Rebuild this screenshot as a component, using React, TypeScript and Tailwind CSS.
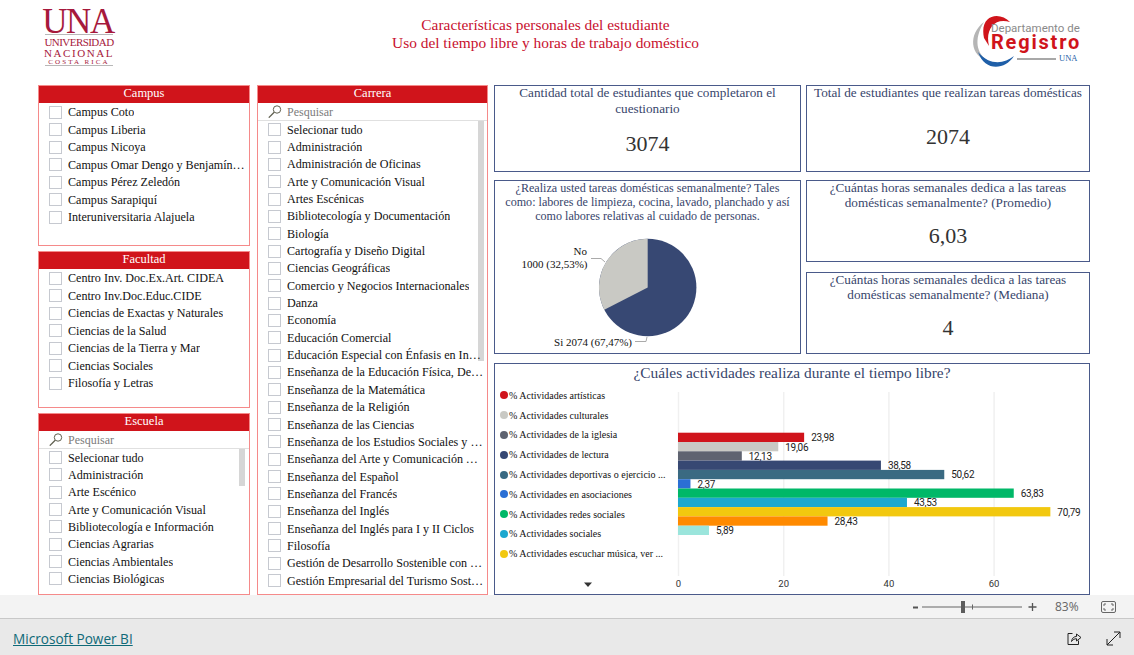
import React from "react";

const serif = { fontFamily: '"Liberation Serif", serif' };

const campus = ["Campus Coto","Campus Liberia","Campus Nicoya","Campus Omar Dengo y Benjamín Núñez","Campus Pérez Zeledón","Campus Sarapiquí","Interuniversitaria Alajuela"];
const facultad = ["Centro Inv. Doc.Ex.Art. CIDEA","Centro Inv.Doc.Educ.CIDE","Ciencias de Exactas y Naturales","Ciencias de la Salud","Ciencias de la Tierra y Mar","Ciencias Sociales","Filosofía y Letras"];
const escuela = ["Selecionar tudo","Administración","Arte Escénico","Arte y Comunicación Visual","Bibliotecología e Información","Ciencias Agrarias","Ciencias Ambientales","Ciencias Biológicas"];
const carrera = ["Selecionar tudo","Administración","Administración de Oficinas","Arte y Comunicación Visual","Artes Escénicas","Bibliotecología y Documentación","Biología","Cartografía y Diseño Digital","Ciencias Geográficas","Comercio y Negocios Internacionales","Danza","Economía","Educación Comercial","Educación Especial con Énfasis en Integración","Enseñanza de la Educación Física, Deporte","Enseñanza de la Matemática","Enseñanza de la Religión","Enseñanza de las Ciencias","Enseñanza de los Estudios Sociales y Educación","Enseñanza del Arte y Comunicación Visual","Enseñanza del Español","Enseñanza del Francés","Enseñanza del Inglés","Enseñanza del Inglés para I y II Ciclos","Filosofía","Gestión de Desarrollo Sostenible con Énfasis","Gestión Empresarial del Turismo Sostenible"];

function SearchRow() {
  return (
    <div className="flex items-center h-[17px] pl-[10px] gap-[5px] shrink-0">
      <svg width="14" height="13" viewBox="0 0 14 13" fill="none" stroke="#5f5f4f" strokeWidth="1">
        <circle cx="9" cy="4.5" r="3.7" />
        <path d="M6.2 7.2 L0.8 12.6" strokeWidth="1.3" />
      </svg>
      <span className="text-[12px] text-[#7b7b7b]">Pesquisar</span>
    </div>
  );
}

function Row({ label, rowClass }: { label: string; rowClass: string }) {
  return (
    <div className={`flex items-center gap-[6px] shrink-0 min-w-0 ${rowClass}`}>
      <span className="w-[13px] h-[13px] border border-[#c6c9d0] bg-white shrink-0" />
      <span className="text-[12.1px] leading-[14px] text-[#111] truncate">{label}</span>
    </div>
  );
}

function Slicer({ title, items, search, className, bar, rowClass }: { title: string; items: string[]; search?: boolean; className: string; bar?: string; rowClass: string }) {
  return (
    <section className={`flex flex-col border border-[#f58a8a] overflow-hidden ${className}`}>
      <div className="h-[17px] shrink-0 bg-[#d0141b] text-white text-[12.5px] leading-[14px] text-center font-normal">{title}</div>
      {search && <SearchRow />}
      <div className={`relative flex-1 min-h-0 overflow-hidden pl-[10px] pr-[3px] ${search ? "border-t border-[#e0e0e0]" : "pt-[0.5px]"}`}>
        {bar && <div className={`absolute top-0 w-[6px] bg-[#d6d6d6] ${bar}`} />}
        <div className="relative flex flex-col">
          {items.map((i) => <Row key={i} label={i} rowClass={rowClass} />)}
        </div>
      </div>
    </section>
  );
}

function Kpi({ title, value, className, valueClass, titleClass }: { title: string; value: string; className: string; valueClass: string; titleClass: string }) {
  return (
    <section className={`flex flex-col border border-[#4a5a8a] px-1 ${className}`}>
      <p className={`text-[13.2px] text-[#37456b] text-center ${titleClass}`}>{title}</p>
      <div className={`flex-1 flex items-center justify-center text-[#333] ${valueClass}`}>{value}</div>
    </section>
  );
}

function Pie() {
  return (
    <section className="w-[307px] h-[174px] border border-[#4a5a8a] flex flex-col">
      <p className="h-[44px] shrink-0 text-[12.1px] leading-[14.2px] text-[#37456b] text-center px-[6px]">
        ¿Realiza usted tareas domésticas semanalmente? Tales como: labores de limpieza, cocina, lavado, planchado y así como labores relativas al cuidado de personas.
      </p>
      <svg viewBox="495 225 305 128" className="w-[305px] h-[128px]" style={serif}>
        <circle cx="647.7" cy="287.5" r="48.7" fill="#374873" />
        <path d="M647.7 287.5 L604.3 309.7 A48.7 48.7 0 0 1 647.7 238.8 Z" fill="#c9c9c4" />
        <path d="M591 258.5 L601 258.5 L605 262" fill="none" stroke="#aaa" />
        <path d="M635 341.5 L646 341.5 L647 337" fill="none" stroke="#aaa" />
        <text x="587" y="255" textAnchor="end" fontSize="11" fill="#111">No</text>
        <text x="587.5" y="268" textAnchor="end" fontSize="11" fill="#111">1000 (32,53%)</text>
        <text x="632" y="346" textAnchor="end" fontSize="11" fill="#111">Si 2074 (67,47%)</text>
      </svg>
    </section>
  );
}

const legend: [string, string][] = [
  ["#d0141b","% Actividades artísticas"],
  ["#c9c9c4","% Actividades culturales"],
  ["#5f6370","% Actividades de la iglesia"],
  ["#374873","% Actividades de lectura"],
  ["#3a6a82","% Actividades deportivas o ejercicio ..."],
  ["#2b6fd4","% Actividades en asociaciones"],
  ["#00b868","% Actividades redes sociales"],
  ["#1da8cf","% Actividades sociales"],
  ["#f2c80f","% Actividades escuchar música, ver ..."],
];

const bars: [string, number, string][] = [
  ["#d0141b",23.98,"23,98"],
  ["#c9c9c4",19.06,"19,06"],
  ["#5f6370",12.13,"12,13"],
  ["#374873",38.58,"38,58"],
  ["#3a6a82",50.62,"50,62"],
  ["#2b6fd4",2.37,"2,37"],
  ["#00b868",63.83,"63,83"],
  ["#1da8cf",43.53,"43,53"],
  ["#f2c80f",70.79,"70,79"],
  ["#ff8a00",28.43,"28,43"],
  ["#9be5dc",5.89,"5,89"],
];

function Chart() {
  return (
    <section className="w-[596px] h-[232px] border border-[#4a5a8a] flex flex-col">
      <h2 className="h-[20px] shrink-0 text-[15.4px] leading-[18px] text-[#37456b] text-center font-normal">¿Cuáles actividades realiza durante el tiempo libre?</h2>
      <div className="flex flex-1 min-h-0">
        <div className="w-[175px] shrink-0 flex flex-col pl-[5px] pt-[1.5px] relative">
          {legend.map(([c, t]) => (
            <div key={t} className="h-[19.8px] flex items-center gap-[1px] text-[10px] text-[#111] whitespace-nowrap">
              <span className="w-[8px] h-[8px] rounded-full shrink-0" style={{ background: c }} />
              <span>{t}</span>
            </div>
          ))}
          <svg width="10" height="6" viewBox="0 0 10 6" className="absolute left-[88px] top-[198px]">
            <path d="M1 0.5 H9 L5 5 Z" fill="#333" />
          </svg>
        </div>
        <svg viewBox="670 384 419 210" className="w-[419px] h-[210px]" style={{ fontFamily: 'Roboto, sans-serif' }}>
          {[0, 20, 40, 60].map((t) => {
            const x = 678.5 + t * 5.26;
            return (
              <g key={t}>
                <line x1={x} x2={x} y1="392" y2="576" stroke="#f0f0f0" strokeWidth="1.5" />
                <text x={x} y="587" textAnchor="middle" fontSize="9.5" fill="#333">{t}</text>
              </g>
            );
          })}
          {bars.map(([c, v, l], i) => {
            const y = 432.7 + i * 9.3;
            const w = v * 5.26;
            return (
              <g key={l}>
                <rect x="678" y={y} width={w} height="9.3" fill={c} />
                <text x={678 + w + 7} y={y + 8.5} fontSize="10" letterSpacing="-0.3" fill="#222">{l}</text>
              </g>
            );
          })}
        </svg>
      </div>
    </section>
  );
}

function UnaLogo() {
  return (
    <div className="w-[70px] flex flex-col items-center text-[#a6193c] leading-none whitespace-nowrap">
      <div className="text-[35px] h-[26px] leading-[27px] tracking-[-1.5px]">UNA</div>
      <div className="w-[68px] h-[1px] bg-[#b8b8b8] ml-[2px] mb-[1px]" />
      <div className="text-[11px] h-[11px] leading-[12px] tracking-[-0.55px] ml-[2px]">UNIVERSIDAD</div>
      <div className="text-[11px] h-[11px] leading-[12px] tracking-[1.55px] ml-[2px]">NACIONAL</div>
      <div className="text-[7px] h-[7px] leading-[8px] tracking-[2.1px] ml-[2px]">COSTA RICA</div>
      <div className="w-[68px] h-[1px] bg-[#b8b8b8] ml-[2px]" />
    </div>
  );
}

function RegistroLogo() {
  return (
    <svg width="120" height="62" viewBox="968 12 120 62" style={{ fontFamily: 'Roboto, sans-serif' }}>
      <path d="M984 22 C968 34 970 56 988 61 C977 54 973 40 984 22 Z" fill="#b5b5b5" />
      <path d="M1010 22 C1000 11 979 14 984 38 L989 46 C985 30 994 17 1010 22 Z" fill="#d0141b" />
      <path d="M978 52 C985 72 1005 70 1014 56 C1004 64 990 66 978 52 Z" fill="#1f5fa8" />
      <text x="991" y="32" fontSize="11.5" fill="#8a8a8a">Departamento de</text>
      <text x="991" y="49" fontSize="20" fontWeight="700" letterSpacing="1.8" fill="#d0141b">Registro</text>
      <rect x="1017" y="58" width="39" height="2" fill="#a8a8a8" />
      <text x="1059" y="61" fontSize="8.5" fill="#1f5fa8" style={serif}>UNA</text>
    </svg>
  );
}

export default function App() {
  return (
    <div className="w-[1134px] h-[655px] flex flex-col bg-white overflow-hidden" style={serif}>
      <header className="h-[85px] shrink-0 flex items-start">
        <div className="w-[130px] pl-[43px] pt-[8px]"><UnaLogo /></div>
        <div className="flex-1 pt-[16px] text-center text-[15.4px] leading-[18px] text-[#c8102e]">
          <div>Características personales del estudiante</div>
          <div>Uso del tiempo libre y horas de trabajo doméstico</div>
        </div>
        <div className="w-[173px] pl-[7px] pt-[12px]"><RegistroLogo /></div>
      </header>
      <main className="h-[510px] shrink-0 flex pl-[38px]">
        <div className="w-[212px] flex flex-col gap-[5px]">
          <Slicer title="Campus" items={campus} className="h-[161px]" rowClass="h-[17.5px]" />
          <Slicer title="Facultad" items={facultad} className="h-[157px]" rowClass="h-[17.5px]" />
          <Slicer title="Escuela" items={escuela} search className="h-[182px]" bar="h-[37px] right-[4px]" rowClass="h-[17.33px]" />
        </div>
        <Slicer title="Carrera" items={carrera} search className="w-[231px] ml-[7px]" bar="h-[240px] right-[3px]" rowClass="h-[17.35px]" />
        <div className="w-[596px] ml-[6px] flex flex-col">
          <div className="flex gap-[5px] h-[87px]">
            <Kpi title="Cantidad total de estudiantes que completaron el cuestionario" value="3074" className="w-[307px]" valueClass="text-[22px] pb-[2px]" titleClass="leading-[16px] px-[4px] -mt-[1px]" />
            <Kpi title="Total de estudiantes que realizan tareas domésticas" value="2074" className="w-[284px]" valueClass="text-[22px]" titleClass="leading-[16px] -mt-[1px]" />
          </div>
          <div className="flex gap-[5px] h-[174px] mt-[8px]">
            <Pie />
            <div className="w-[284px] flex flex-col gap-[10px]">
              <Kpi title="¿Cuántas horas semanales dedica a las tareas domésticas semanalmente? (Promedio)" value="6,03" className="h-[82px]" valueClass="text-[22px] pb-[1px]" titleClass="leading-[14.5px] px-[4px]" />
              <Kpi title="¿Cuántas horas semanales dedica a las tareas domésticas semanalmente? (Mediana)" value="4" className="h-[82px]" valueClass="text-[22px] pb-[1px]" titleClass="leading-[14.5px] px-[4px]" />
            </div>
          </div>
          <div className="mt-[9px]"><Chart /></div>
        </div>
      </main>
      <div className="h-[24px] shrink-0 bg-[#f3f3f3] border-b border-[#c8c8c8] flex items-center justify-end text-[#666]" style={{ fontFamily: '"Open Sans", sans-serif' }}>
        <svg width="124" height="14" viewBox="0 0 124 14" className="mr-[18px]">
          <rect x="0" y="6.5" width="5" height="2" fill="#555" />
          <rect x="9" y="6.5" width="100" height="1" fill="#666" />
          <rect x="48" y="1" width="4" height="12" fill="#5c5c5c" />
          <rect x="59" y="4.5" width="1" height="5" fill="#666" />
          <path d="M119.5 3 V11 M115.5 7 H123.5" stroke="#555" strokeWidth="1.3" />
        </svg>
        <span className="text-[12px] w-[24px] mr-[22px]">83%</span>
        <svg width="15" height="12" viewBox="0 0 15 12" fill="none" stroke="#666" className="mr-[18px]">
          <rect x="0.5" y="0.5" width="14" height="11" rx="1.5" />
          <path d="M3 5 V3 H5 M10 3 H12 V5 M3 7 V9 H5 M10 9 H12 V7" />
        </svg>
      </div>
      <footer className="flex-1 bg-[#e9e9e9] flex items-center pl-[13px] pt-[3px]" style={{ fontFamily: '"Open Sans", sans-serif' }}>
        <span className="text-[13.6px] font-medium underline text-[#0f6a78] pt-[2px]">Microsoft Power BI</span>
        <svg width="15" height="15" viewBox="0 0 15 15" fill="none" stroke="#222" className="ml-auto mr-[24px]">
          <path d="M5.5 2.5 H1 V13.5 H11.5 V9.5" />
          <path d="M4.5 10.5 C5 7 7 5.5 9.5 5.5 V3 L14 6.5 L9.5 10 V7.7 C7.5 7.7 6 8.5 4.5 10.5 Z" />
        </svg>
        <svg width="15" height="15" viewBox="0 0 15 15" fill="none" stroke="#222" className="mr-[13px]">
          <path d="M1 14 L14 1 M8 1 H14 V7 M1 8 V14 H7" />
        </svg>
      </footer>
    </div>
  );
}
